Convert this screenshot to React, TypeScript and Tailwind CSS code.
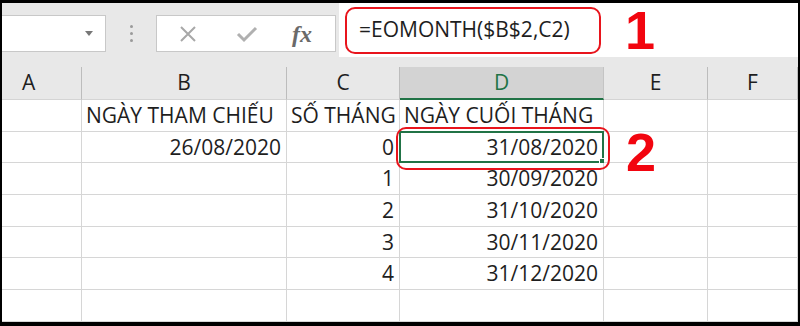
const cols = [80, 205, 113, 204, 104, 90]
const letters = ['A', 'B', 'C', 'D', 'E', 'F']

type Row = string[]
const rows: Row[] = [
  ['', 'NGÀY THAM CHIẾU', 'SỐ THÁNG', 'NGÀY CUỐI THÁNG', '', ''],
  ['', '26/08/2020', '0', '31/08/2020', '', ''],
  ['', '', '1', '30/09/2020', '', ''],
  ['', '', '2', '31/10/2020', '', ''],
  ['', '', '3', '30/11/2020', '', ''],
  ['', '', '4', '31/12/2020', '', ''],
  ['', '', '', '', '', ''],
]
const rowHeights = [32, 31, 32, 32, 31, 32, 32]

function Toolbar() {
  return (
    <div className="relative flex h-[64px] bg-[#e8e8e8]">
      {/* name box */}
      <div className="mt-[12px] flex h-[37px] w-[104px] items-center justify-end border border-l-0 border-[#c8c8c8] bg-white pr-[12px]">
        <span className="h-0 w-0 border-x-[4px] border-t-[5px] border-x-transparent border-t-[#777]" />
      </div>
      <div className="ml-[24px] mt-[22px] flex flex-col gap-[4px]">
        <span className="h-[3px] w-[3px] rounded-full bg-[#9a9a9a]" />
        <span className="h-[3px] w-[3px] rounded-full bg-[#9a9a9a]" />
        <span className="h-[3px] w-[3px] rounded-full bg-[#9a9a9a]" />
      </div>
      {/* cancel / enter / fx */}
      <div className="ml-[23px] mt-[12px] flex h-[37px] w-[180px] items-center border border-[#c8c8c8] bg-white">
        <svg width="20" height="20" viewBox="0 0 20 20" className="ml-[21px]">
          <path d="M3 3 L17 17 M17 3 L3 17" stroke="#a8a8a8" strokeWidth="2" fill="none" />
        </svg>
        <svg width="22" height="20" viewBox="0 0 22 20" className="ml-[38px]">
          <path d="M2 10 L8 16 L20 4" stroke="#b0b0b0" strokeWidth="3" fill="none" />
        </svg>
        <span className="ml-[34px] font-['Liberation_Serif',serif] text-[24px] italic font-bold leading-none text-[#6a6a6a]">
          fx
        </span>
      </div>
      {/* formula field */}
      <div className="ml-[3px] flex h-[54px] flex-1 items-center bg-white">
        <div className="ml-[6px] flex h-[47px] w-[256px] items-center rounded-[10px] border-2 border-[#e8141c] pl-[12px]">
          <span className="font-['Open_Sans',sans-serif] text-[21px] text-[#1e1e1e]">=EOMONTH($B$2,C2)</span>
        </div>
        <span className="ml-[24px] font-['Liberation_Sans',sans-serif] text-[54px] font-bold leading-none text-[#f2050f]">
          1
        </span>
      </div>
    </div>
  )
}

function Grid() {
  return (
    <div className="relative flex-1 bg-white font-['Open_Sans',sans-serif] text-[21px] text-[#1e1e1e]">
      <div className="flex h-[33px] bg-[#e8e8e8]">
        {letters.map((l, i) => (
          <div
            key={l}
            style={{ width: cols[i] }}
            className={
              i === 3
                ? 'flex items-center justify-center border-b-2 border-r border-b-[#217346] border-r-[#c4c4c4] bg-[#d3d3d3] text-[#217346]'
                : i === 0
                  ? 'flex items-center border-b border-r border-b-[#d4d4d4] border-r-[#bcbcbc] pl-[20px]'
                  : 'flex items-center justify-center border-b border-r border-b-[#d4d4d4] border-r-[#bcbcbc]'
            }
          >
            {l}
          </div>
        ))}
      </div>
      {rows.map((r, ri) => (
        <div key={ri} className="flex" style={{ height: rowHeights[ri] }}>
          {r.map((v, ci) => {
            const isHeader = ri === 0
            const selected = ri === 1 && ci === 3
            return (
              <div
                key={ci}
                style={{ width: cols[ci] }}
                className={
                  'relative flex items-center border-b border-r border-[#d6d6d6] ' +
                  (isHeader ? 'justify-start pl-[4px]' : 'justify-end pr-[5px]')
                }
              >
                {selected && (
                  <div className="absolute inset-[-1px] border-2 border-[#217346]">
                    <span className="absolute bottom-[-3px] right-[-3px] h-[6px] w-[6px] border border-white bg-[#217346]" />
                  </div>
                )}
                <span className="relative leading-none">{v}</span>
              </div>
            )
          })}
        </div>
      ))}
      {/* annotation around selected cell */}
      <div className="absolute left-[394px] top-[60px] h-[43px] w-[214px] rounded-[10px] border-2 border-[#e8141c]" />
      <span className="absolute left-[624px] top-[58px] font-['Liberation_Sans',sans-serif] text-[54px] font-bold leading-none text-[#f2050f]">
        2
      </span>
    </div>
  )
}

export default function App() {
  return (
    <div className="h-[326px] w-[800px] bg-black pb-[4px] pl-[2px] pr-[2px] pt-[3px]">
      <div className="flex h-full flex-col overflow-hidden">
        <Toolbar />
        <Grid />
      </div>
    </div>
  )
}
